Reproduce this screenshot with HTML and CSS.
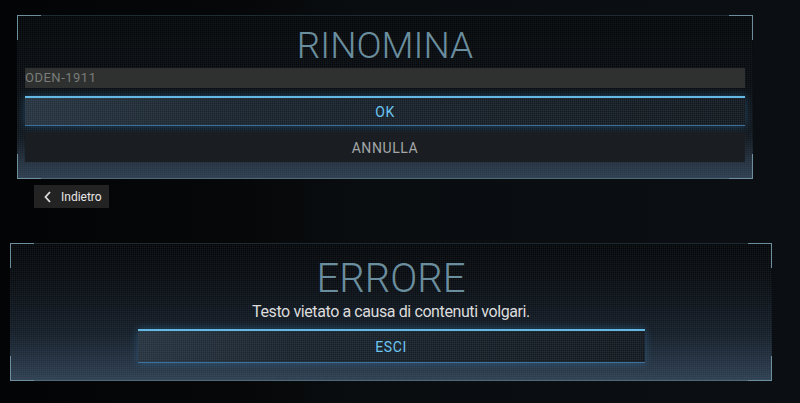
FILE: index.html
```html
<!DOCTYPE html>
<html lang="it">
<head>
    <meta charset="UTF-8">
    <meta name="viewport" content="width=device-width, initial-scale=1.0">
    <link rel="stylesheet" href="styles.css">
    <title>Rinomina</title>
</head>
<body>
    <div class="screen">
        <div class="panel rename">
            <span class="corner tl"></span>
            <span class="corner tr"></span>
            <span class="corner bl"></span>
            <span class="corner br"></span>
            <h2 class="title">RINOMINA</h2>
            <div class="name-field">ODEN-1911</div>
            <div class="btn btn-focus">OK</div>
            <div class="btn btn-plain">ANNULLA</div>
        </div>

        <div class="back">
            <svg width="8" height="12" viewBox="0 0 8 12">
                <polyline points="6,1 1.5,6 6,11" fill="none" stroke="#ddd" stroke-width="1.8"/>
            </svg>
            <span>Indietro</span>
        </div>

        <div class="panel error">
            <span class="corner tl"></span>
            <span class="corner tr"></span>
            <span class="corner bl"></span>
            <span class="corner br"></span>
            <h2 class="title big">ERRORE</h2>
            <p class="message">Testo vietato a causa di contenuti volgari.</p>
            <div class="btn btn-focus btn-exit">ESCI</div>
        </div>
    </div>
</body>
</html>
```

FILE: styles.css
```css
body {
    margin: 0;
    background: linear-gradient(90deg, #030405 0%, #050708 30%, #0a0d10 45%, #0b0e12 100%);
    font-family: Roboto, "DejaVu Sans", sans-serif;
    height: 403px;
    overflow: hidden;
}

.screen {
    padding-top: 15px;
}

.panel {
    position: relative;
    box-sizing: border-box;
    border-top: 1px solid #1f2b33;
    border-bottom: 1px solid #4f6878;
    background-color: #07090b;
}

.corner {
    position: absolute;
    width: 23px;
    height: 24px;
    border-color: #6d8e9c;
    border-style: solid;
    border-width: 0;
}
.tl { top: -1px; left: 0; border-top-width: 1px; border-left-width: 1px; }
.tr { top: -1px; right: 0; border-top-width: 1px; border-right-width: 1px; }
.bl { bottom: -1px; left: 0; border-bottom-width: 1px; border-left-width: 1px; }
.br { bottom: -1px; right: 0; border-bottom-width: 1px; border-right-width: 1px; }

.rename {
    margin-left: 17px;
    width: 736px;
    height: 164px;
    padding: 10px 8px 0;
    background-image:
        repeating-linear-gradient(90deg, rgba(120, 150, 180, 0.05) 0 1px, transparent 1px 2px),
        repeating-linear-gradient(0deg, rgba(120, 150, 180, 0.05) 0 1px, transparent 1px 2px),
        linear-gradient(180deg, #050607 0%, #090c0f 40%, #11171d 75%, #24303d 90%, #2e3e4e 100%);
}

.title {
    margin: 0;
    text-align: center;
    font-weight: 300;
    font-size: 37px;
    line-height: 40px;
    color: #6a8e9e;
}

.name-field {
    margin-top: 2px;
    height: 20px;
    line-height: 20px;
    background: #2e312f;
    color: #7a7c7a;
    font-size: 13px;
    letter-spacing: 0.5px;
}

.btn {
    box-sizing: border-box;
    height: 30px;
    text-align: center;
    font-size: 14px;
    letter-spacing: 0.6px;
}

.btn-focus {
    margin-top: 8px;
    line-height: 29px;
    color: #6cc6f2;
    border-top: 2px solid #64b8e4;
    border-bottom: 1px solid #3a7099;
    box-shadow: 0 0 8px rgba(60, 140, 200, 0.4);
    background-color: #15191d;
    background-image:
        repeating-linear-gradient(90deg, rgba(120, 170, 210, 0.07) 0 1px, transparent 1px 2px),
        repeating-linear-gradient(0deg, rgba(120, 170, 210, 0.07) 0 1px, transparent 1px 2px),
        linear-gradient(90deg, #28323c 0%, #1a2128 30%, #13171b 100%);
}

.btn-plain {
    margin-top: 6px;
    line-height: 32px;
    color: #a4a6a8;
    background: #1a1e22;
}

.back {
    display: flex;
    align-items: center;
    gap: 9px;
    margin: 6px 0 0 34px;
    width: 75px;
    height: 23px;
    box-sizing: border-box;
    padding-left: 10px;
    background: #232323;
    color: #e6e6e6;
    font-size: 12px;
}

.error {
    margin: 35px 0 0 10px;
    width: 762px;
    height: 138px;
    padding-top: 14px;
    display: flex;
    flex-direction: column;
    align-items: center;
    background-image:
        repeating-linear-gradient(90deg, rgba(120, 150, 180, 0.06) 0 1px, transparent 1px 2px),
        repeating-linear-gradient(0deg, rgba(120, 150, 180, 0.06) 0 1px, transparent 1px 2px),
        linear-gradient(180deg, #050607 0%, #0a0d11 30%, #151d26 65%, #253241 88%, #2f4050 100%);
}

.title.big {
    font-size: 40px;
    line-height: 42px;
}

.message {
    margin: 3px 0 0;
    font-size: 16px;
    line-height: 18px;
    color: #dcdcdc;
    letter-spacing: -0.4px;
}

.btn-exit {
    margin-top: 8px;
    width: 507px;
    height: 34px;
    line-height: 32px;
}
```
